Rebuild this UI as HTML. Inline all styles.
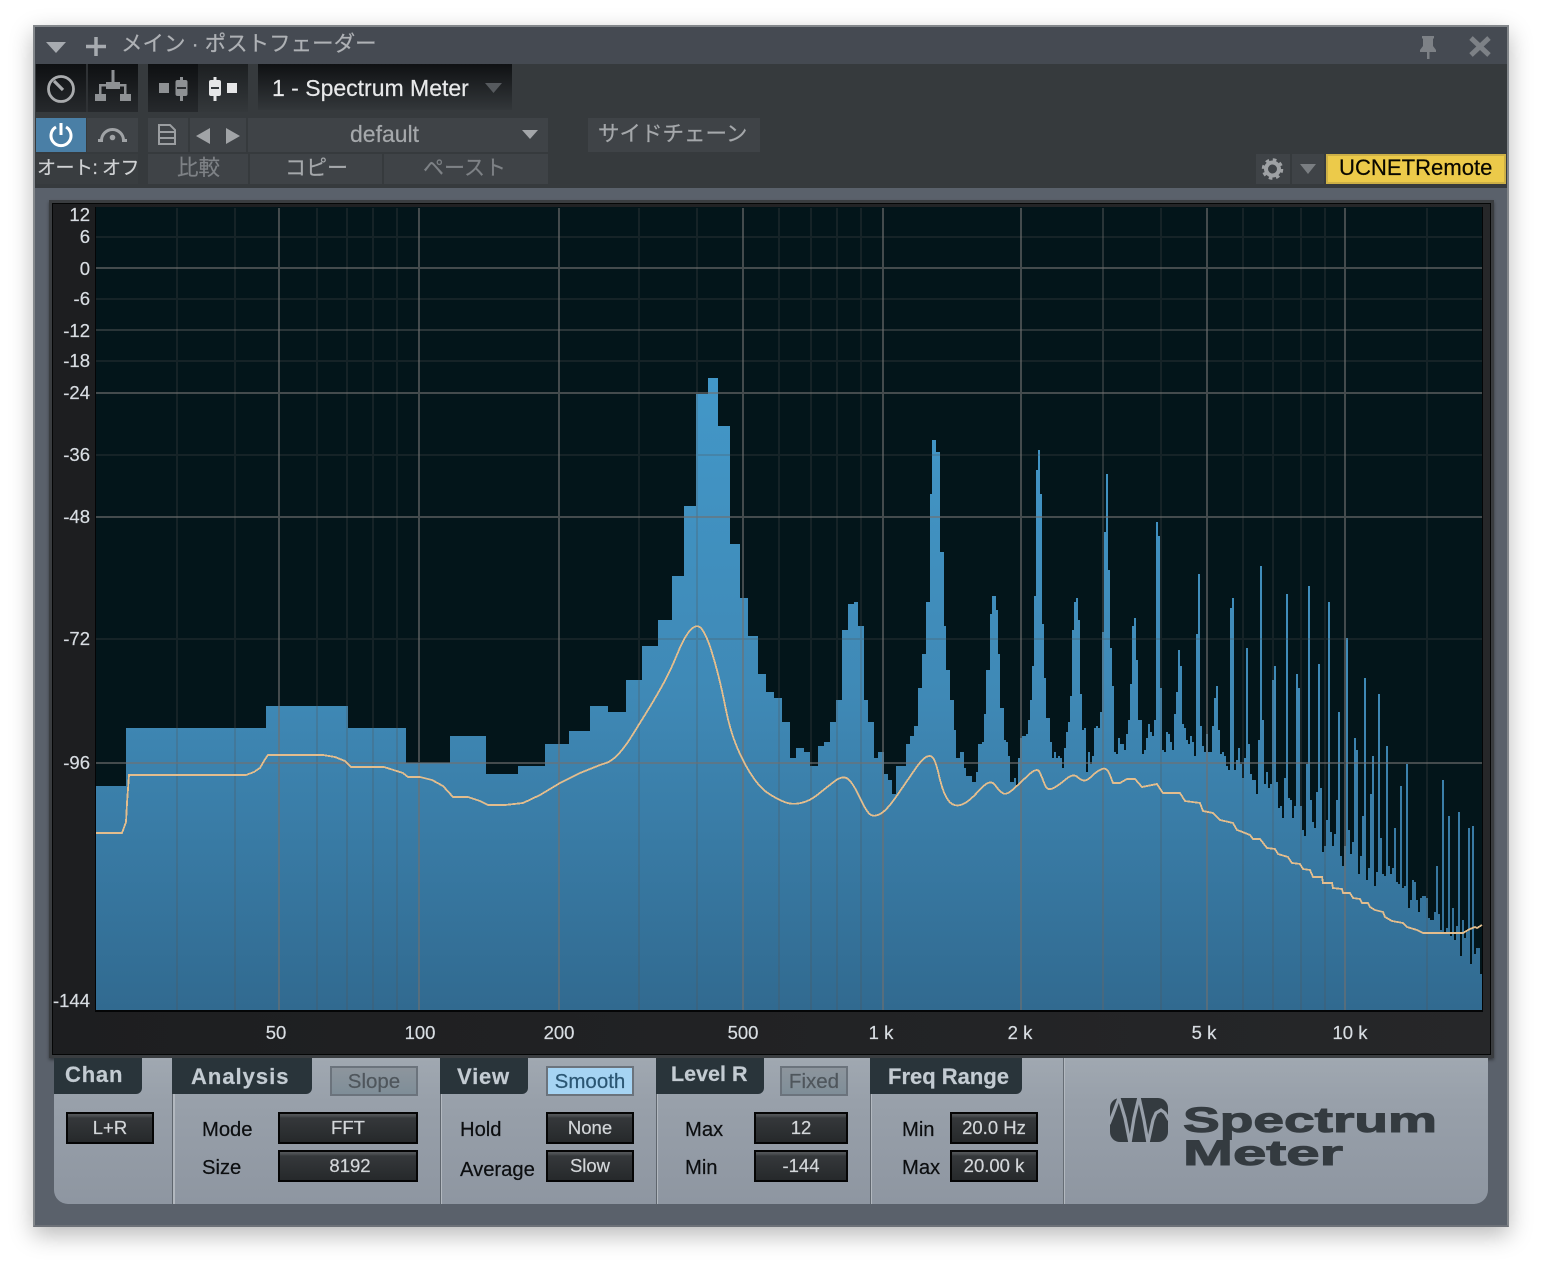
<!DOCTYPE html>
<html lang="ja"><head><meta charset="utf-8"><title>Spectrum Meter</title>
<style>
html,body{margin:0;padding:0;background:#fff;width:1542px;height:1268px;overflow:hidden}
body{font-family:"Liberation Sans","Noto Sans CJK JP",sans-serif;position:relative;-webkit-text-stroke:.2px}
.b{position:absolute;box-sizing:border-box}
.t{position:absolute;white-space:nowrap;line-height:1}
.btn{position:absolute;box-sizing:border-box;border:2px solid #050505;background:linear-gradient(#55585b 0,#4a4d50 2px,#35383b 4px,#26292b 100%);color:#d3d6d9;font-size:18.5px;display:flex;align-items:center;justify-content:center;height:32px}
.tab{position:absolute;background:#29343a;border-radius:0 0 6px 0;height:36px;top:1058px}
.tt{position:absolute;white-space:nowrap;line-height:1;font-weight:bold;font-size:22px;color:#c3cbd2}
.lb{position:absolute;white-space:nowrap;line-height:1;font-size:20.2px;color:#0c0e10}
.tg{position:absolute;box-sizing:border-box;border:2px solid #6b737c;height:30px;top:1066px;background:linear-gradient(#8d959d,#7f8e98);color:#4f565c;font-size:20.5px;display:flex;align-items:center;justify-content:center;padding-top:2px}
.yl{position:absolute;right:1452px;white-space:nowrap;line-height:1;font-size:18.5px;color:#d8dde2}
.xl{position:absolute;top:1024px;width:80px;text-align:center;line-height:1;font-size:18.5px;color:#d8dde2}
.tb{position:absolute;box-sizing:border-box;background:#3f4347}
</style></head><body>

<div class="b" style="left:33px;top:25px;width:1476px;height:1202px;background:#5a616b;border:2px solid #83878b;border-bottom-color:#6d7178;box-shadow:0 8px 22px rgba(0,0,0,.28)"></div>
<div class="b" style="left:35px;top:27px;width:1472px;height:37px;background:#454a52"></div>
<div class="b" style="left:35px;top:64px;width:1472px;height:124px;background:#363a3d"></div>

<div class="b" style="left:36px;top:64px;width:102px;height:48px;background:linear-gradient(#0e1012,#26292c)"></div>
<div class="b" style="left:86px;top:64px;width:2px;height:48px;background:#2f3235"></div>
<div class="b" style="left:148px;top:64px;width:50px;height:48px;background:linear-gradient(#0e1012,#26292c)"></div>
<div class="b" style="left:198px;top:64px;width:50px;height:48px;background:linear-gradient(#1c1f21,#34383b)"></div>
<div class="b" style="left:258px;top:64px;width:254px;height:46px;background:linear-gradient(#0f1113,#33373a)"></div>

<div class="tb" style="left:36px;top:118px;width:50px;height:34px;background:#4a7fa6"></div>
<div class="tb" style="left:87px;top:118px;width:51px;height:34px"></div>
<div class="tb" style="left:148px;top:118px;width:40px;height:34px"></div>
<div class="tb" style="left:190px;top:118px;width:56px;height:34px"></div>
<div class="tb" style="left:248px;top:118px;width:300px;height:34px"></div>
<div class="tb" style="left:588px;top:118px;width:172px;height:34px"></div>
<div class="tb" style="left:36px;top:154px;width:102px;height:30px;background:#393d40"></div>
<div class="tb" style="left:148px;top:154px;width:100px;height:30px"></div>
<div class="tb" style="left:250px;top:154px;width:132px;height:30px"></div>
<div class="tb" style="left:384px;top:154px;width:164px;height:30px"></div>
<div class="tb" style="left:1256px;top:154px;width:34px;height:30px"></div>
<div class="tb" style="left:1292px;top:154px;width:32px;height:30px"></div>
<div class="b" style="left:1326px;top:154px;width:180px;height:30px;background:#ecca4a;border:2px solid #cdb046"></div>

<!-- display frame -->
<div class="b" style="left:49px;top:200px;width:1445px;height:858px;background:linear-gradient(90deg,#1d1e20,#262729);border:3px solid #3a3d40;box-shadow:0 2px 3px rgba(0,0,0,.4)"></div>
<div class="b" style="left:52px;top:203px;width:1439px;height:852px;border:1px solid #050606"></div>

<!-- bottom panel -->
<div class="b" style="left:54px;top:1058px;width:1434px;height:146px;background:linear-gradient(#a0a8b1,#98a0aa 30%,#8e96a1);border-radius:0 0 14px 14px"></div>
<div class="b" style="left:172px;top:1094px;width:1px;height:110px;background:#5f666e"></div><div class="b" style="left:173px;top:1094px;width:2px;height:110px;background:#b2b8bf"></div>
<div class="b" style="left:440px;top:1094px;width:1px;height:110px;background:#5f666e"></div><div class="b" style="left:441px;top:1094px;width:1px;height:110px;background:#b2b8bf"></div>
<div class="b" style="left:656px;top:1094px;width:1px;height:110px;background:#5f666e"></div><div class="b" style="left:657px;top:1094px;width:1px;height:110px;background:#b2b8bf"></div>
<div class="b" style="left:870px;top:1094px;width:1px;height:110px;background:#5f666e"></div><div class="b" style="left:871px;top:1094px;width:1px;height:110px;background:#b2b8bf"></div>
<div class="b" style="left:1063px;top:1058px;width:1px;height:146px;background:#666d75"></div><div class="b" style="left:1064px;top:1058px;width:1px;height:146px;background:#b2b8bf"></div>

<div class="tab" style="left:54px;width:88px"></div>
<div class="tab" style="left:172px;width:140px"></div>
<div class="tab" style="left:440px;width:88px"></div>
<div class="tab" style="left:656px;width:108px"></div>
<div class="tab" style="left:870px;width:152px"></div>

<svg width="1542" height="1268" viewBox="0 0 1542 1268" style="position:absolute;left:0;top:0;-webkit-text-stroke:0">
<defs><linearGradient id="g" gradientUnits="userSpaceOnUse" x1="0" y1="380" x2="0" y2="1010"><stop offset="0" stop-color="#4297c8"/><stop offset=".5" stop-color="#3f89b6"/><stop offset="1" stop-color="#316a90"/></linearGradient></defs>
<rect x="95" y="207" width="1388" height="805" fill="#040506"/>
<rect x="96" y="207" width="1386" height="803" fill="#03151a"/>
<path fill="url(#g)" d="M96 1010V786H126V728H266V706H348V728H406V763H450V736H486V774H518V766H545V744H569V731H590V706H608V712H626V680H642V646H658V620H672V576H684V506H696V394H708V378H718V426H730V544H740V598H748V636H758V674H766V692H774V698H782V722H790V758H796V748H804V752H810V766H818V746H824V742H830V722H836V700H842V630H848V604H854V602H858V626H864V700H868V722H874V758H878V752H884V774H888V780H892V794H896V766H906V744H910V736H914V726H918V688H922V654H926V602H930V494H932V440H936V452H940V552H944V626H946V670H950V700H954V730H956V758H960V752H964V768H966V776H972V782H976V772H978V744H982V742H984V714H986V670H990V614H992V596H996V610H998V654H1000V708H1004V740H1006V742H1008V756H1010V782H1014V778H1016V786H1018V758H1020V738H1022V736H1026V734H1028V720H1030V700H1032V666H1034V596H1036V470H1038V450H1040V494H1042V624H1044V678H1046V718H1050V742H1052V758H1054V752H1056V758H1058V756H1060V758H1062V768H1064V748H1066V732H1068V722H1070V696H1072V630H1074V602H1076V598H1078V620H1080V694H1082V730H1084V728H1086V772H1088V752H1090V764H1092V756H1094V728H1096V726H1098V728H1100V712H1102V632H1104V532H1106V474H1108V570H1110V648H1112V686H1114V752H1116V754H1118V738H1120V744H1124V750H1126V734H1128V720H1130V684H1132V626H1134V618H1136V660H1138V720H1142V754H1144V750H1146V738H1148V724H1150V732H1152V736H1154V720H1156V522H1158V536H1160V688H1162V750H1164V752H1166V732H1168V734H1170V742H1172V750H1174V714H1176V692H1178V650H1180V666H1182V724H1184V728H1186V740H1188V744H1190V736H1192V742H1194V756H1196V634H1198V574H1200V726H1202V746H1204V752H1206V734H1208V752H1212V726H1214V698H1216V686H1218V730H1220V754H1222V752H1224V756H1226V766H1228V770H1230V608H1232V598H1234V770H1236V760H1238V748H1240V764H1242V778H1244V758H1246V648H1248V744H1250V774H1252V780H1256V794H1258V740H1260V566H1262V720H1264V784H1266V772H1268V788H1270V784H1272V680H1274V666H1276V782H1278V808H1280V806H1282V818H1284V778H1286V594H1288V798H1290V800H1292V818H1294V806H1296V674H1298V688H1300V806H1302V830H1304V836H1306V764H1308V586H1310V800H1312V822H1314V828H1316V792H1318V664H1320V788H1322V852H1324V846H1326V820H1328V602H1330V832H1332V846H1334V834H1336V800H1338V712H1340V856H1342V866H1344V846H1346V638H1348V830H1350V854H1352V842H1354V738H1356V750H1358V874H1360V856H1362V816H1364V678H1366V880H1368V868H1370V794H1372V756H1374V886H1376V872H1378V694H1380V838H1382V874H1384V876H1386V746H1388V866H1390V874H1392V868H1394V828H1396V882H1398V884H1400V786H1402V888H1404V886H1406V764H1408V908H1410V900H1412V880H1414V882H1416V900H1418V912H1420V898H1422V896H1426V898H1428V918H1430V920H1434V912H1436V866H1438V914H1440V930H1442V780H1444V932H1446V928H1448V816H1450V936H1452V908H1454V940H1456V926H1458V812H1460V956H1462V920H1464V938H1466V932H1468V828H1470V964H1472V826H1474V954H1476V948H1480V974H1482V1010Z"/>
<g shape-rendering="crispEdges" stroke-width="2" fill="none">
<path stroke="#555" stroke-opacity=".24" d="M177 208V1010M235 208V1010M317 208V1010M347 208V1010M373 208V1010M397 208V1010M639 208V1010M697 208V1010M779 208V1010M811 208V1010M837 208V1010M861 208V1010M1161 208V1010M1243 208V1010M1273 208V1010M1301 208V1010M1325 208V1010M1427 208V1010M96 237H1482M96 299H1482M96 361H1482M96 455H1482M96 639H1482"/>
<path stroke="#666" stroke-opacity=".4" d="M1103 208V1010M96 330H1482"/>
<path stroke="#707070" stroke-opacity=".6" d="M279 208V1010M419 208V1010M559 208V1010M743 208V1010M883 208V1010M1021 208V1010M1207 208V1010M1345 208V1010M96 268H1482M96 393H1482M96 517H1482M96 763H1482"/>
</g>
<path fill="none" stroke="#e3bd8d" stroke-width="1.8" shape-rendering="crispEdges" d="M96 833L122 833L126 822L127 803L129 775L246 775L254 772L260 768L264 761L268 755L323 755L335 757L345 761L351 767L384 767L403 773L408 777L420 777L432 780L443 786L453 797L468 797L480 801L488 805L505 805L523 803L540 795L560 783L580 773L600 765L606 763Q612,761 618.5,754Q625,747 631.5,736.5Q638,726 645.5,714Q653,702 661.5,687Q670,672 677.5,653.5Q685,635 691.5,629Q698,623 702.5,630Q707,637 711,649.5Q715,662 718.5,676Q722,690 726,710Q730,730 736.5,746Q743,762 751.5,775Q760,788 768.5,793.5Q777,799 784.5,802Q792,805 801,803Q810,801 818.5,794Q827,787 835,781Q843,775 848,779Q853,783 860,798Q867,813 871,815Q875,817 881,813.5Q887,810 897,795.5Q907,781 913.5,771.5Q920,762 924,758.5Q928,755 931.5,756.5Q935,758 939,775.5Q943,793 948,800Q953,807 960.5,805Q968,803 979,790.5Q990,778 995,785Q1000,792 1003.5,793.5Q1007,795 1013.5,789Q1020,783 1028.5,775Q1037,767 1039.5,772Q1042,777 1044.5,784Q1047,791 1052.5,788.5Q1058,786 1065.5,779.5Q1073,773 1077.5,777Q1082,781 1085,780.5Q1088,780 1092.5,775.5Q1097,771 1102,769Q1107,767 1110,775L1113 783L1120 783L1127 779L1135 779L1142 787L1157 784L1163 793L1180 793L1185 801L1200 803L1203 811L1213 813L1220 820L1233 823L1237 830L1240 831L1250 835L1253 839L1260 839L1267 848L1275 849L1278 854L1288 857L1292 863L1300 864L1303 869L1310 870L1313 877L1322 877L1323 883L1332 883L1333 888L1342 889L1343 893L1350 893L1353 898L1360 899L1362 903L1368 903L1370 907L1375 910L1383 912L1385 917L1392 921L1403 923L1407 927L1417 930L1423 933L1447 933L1463 933L1470 929L1475 927L1477 928L1482 925"/>

<!-- title icons -->
<path d="M46 42H66L56 53Z" fill="#a7abb0"/>
<path d="M86 46.5H106M96 37V56" stroke="#a7abb0" stroke-width="3.5"/>
<path d="M1422 36H1434V38L1433 39V46L1436 50V52H1429.5V59H1427V52H1420V50L1423 46V39L1422 38Z" fill="#7d8186"/>
<path d="M1471 38L1489 55M1489 38L1471 55" stroke="#7d8186" stroke-width="5"/>
<!-- knob -->
<circle cx="61" cy="89" r="12.5" fill="none" stroke="#a9abad" stroke-width="2.8"/>
<path d="M54 81L63 90" stroke="#a9abad" stroke-width="3.2"/>
<!-- tree -->
<g fill="#8e9194" stroke="none"><rect x="111.5" y="70" width="3" height="13"/><rect x="106" y="82" width="14" height="7"/><rect x="99" y="84" width="27" height="2.5"/><rect x="99" y="84" width="2.5" height="11"/><rect x="124" y="84" width="2.5" height="11"/><rect x="95" y="94" width="11" height="7"/><rect x="120" y="94" width="11" height="7"/></g>
<!-- mixer icons -->
<rect x="159" y="83" width="10" height="10" fill="#8e9194"/>
<rect x="180" y="77" width="3" height="24" fill="#8e9194"/><rect x="175.5" y="80" width="12" height="16" rx="2" fill="#8e9194"/><rect x="177" y="87" width="9" height="2" fill="#2a2d30"/>
<rect x="213.5" y="77" width="3" height="24" fill="#e6e7e8"/><rect x="209" y="80" width="12" height="16" rx="2" fill="#e6e7e8"/><rect x="211" y="87" width="8" height="2" fill="#34383b"/>
<rect x="227" y="83" width="10" height="10" fill="#e6e7e8"/>
<path d="M485 83H502L493.5 93Z" fill="#565a5e"/>
<!-- power -->
<path d="M56 127A10 10 0 1 0 66 127" fill="none" stroke="#fff" stroke-width="3"/><path d="M61 123V135" stroke="#fff" stroke-width="3"/>
<path d="M98 140.500H101.500A11 11 0 0 1 123.500 140.500H127" fill="none" stroke="#a0a3a6" stroke-width="3"/><circle cx="112.500" cy="137.500" r="2.800" fill="#a0a3a6"/>
<!-- file -->
<path d="M159 125H170L175 130V144H159Z M159 132H175 M159 138H175" fill="none" stroke="#9b9ea1" stroke-width="2"/>
<path d="M210 128V144L196 136Z M226 128V144L240 136Z" fill="#a1a4a7"/>
<path d="M522 130H538L530 139Z" fill="#a3a6a9"/>
<!-- gear -->
<circle cx="1272.5" cy="169" r="6.5" fill="none" stroke="#9ea1a4" stroke-width="4"/>
<circle cx="1272.5" cy="169" r="9" fill="none" stroke="#9ea1a4" stroke-width="3.5" stroke-dasharray="3.5 3.57"/>
<path d="M1300 164H1316L1308 174Z" fill="#7a7e82"/>
<!-- logo -->
<rect x="1110" y="1098" width="58" height="44" rx="10" fill="#343b40"/>
<polyline fill="none" stroke="#98a0aa" stroke-width="3.2" stroke-linejoin="miter" points="1109,1124 1113,1114 1119,1098 1125,1118 1130,1143 1134,1118 1139,1097 1144,1120 1148,1143 1153,1120 1156,1113 1161,1110 1165,1113 1169,1120"/>
<g font-family="'Liberation Sans',sans-serif" font-weight="bold" fill="#343b40" font-size="35">
<text x="1183" y="1132" textLength="254" lengthAdjust="spacingAndGlyphs" stroke="#343b40" stroke-width="1">Spectrum</text>
<text x="1183" y="1165" textLength="160" lengthAdjust="spacingAndGlyphs" stroke="#343b40" stroke-width="1">Meter</text>
</g>
</svg>

<!-- toolbar text -->
<div class="t" style="left:121px;top:34px;font-size:21.5px;color:#aeb1b5">メイン · ポストフェーダー</div>
<div class="t" style="left:272px;top:77px;font-size:23px;color:#e8e9ea">1 - Spectrum Meter</div>
<div class="t" style="left:350px;top:123px;font-size:23px;color:#a5a8ab">default</div>
<div class="t" style="left:598px;top:124px;font-size:21.5px;color:#a5a8ab">サイドチェーン</div>
<div class="t" style="left:37px;top:159px;font-size:19px;letter-spacing:-.5px;color:#d0d2d4">オート: オフ</div>
<div class="t" style="left:177px;top:158px;font-size:21.5px;color:#7e8286">比較</div>
<div class="t" style="left:285px;top:158px;font-size:21px;color:#a5a8ab">コピー</div>
<div class="t" style="left:423px;top:158px;font-size:21px;color:#7e8286">ペースト</div>
<div class="t" style="left:1339px;top:157px;font-size:22.1px;color:#0a0800">UCNETRemote</div>

<!-- y labels -->
<div class="yl" style="top:206px">12</div><div class="yl" style="top:228px">6</div><div class="yl" style="top:260px">0</div><div class="yl" style="top:290px">-6</div><div class="yl" style="top:322px">-12</div><div class="yl" style="top:352px">-18</div><div class="yl" style="top:384px">-24</div><div class="yl" style="top:446px">-36</div><div class="yl" style="top:508px">-48</div><div class="yl" style="top:630px">-72</div><div class="yl" style="top:754px">-96</div><div class="yl" style="top:992px">-144</div>
<!-- x labels -->
<div class="xl" style="left:236px">50</div><div class="xl" style="left:380px">100</div><div class="xl" style="left:519px">200</div><div class="xl" style="left:703px">500</div><div class="xl" style="left:841px">1 k</div><div class="xl" style="left:980px">2 k</div><div class="xl" style="left:1164px">5 k</div><div class="xl" style="left:1310px">10 k</div>

<!-- tabs -->
<div class="tt" style="left:65px;top:1064px;letter-spacing:.8px">Chan</div>
<div class="tt" style="left:191px;top:1066px;letter-spacing:1px">Analysis</div>
<div class="tt" style="left:457px;top:1066px;letter-spacing:.8px">View</div>
<div class="tt" style="left:671px;top:1064px;font-size:21.5px">Level R</div>
<div class="tt" style="left:888px;top:1066px">Freq Range</div>

<div class="tg" style="left:330px;width:88px">Slope</div>
<div class="tg" style="left:546px;width:88px;background:#a6d4f3;color:#2b5673">Smooth</div>
<div class="tg" style="left:780px;width:68px">Fixed</div>

<div class="btn" style="left:66px;top:1112px;width:88px">L+R</div>
<div class="btn" style="left:278px;top:1112px;width:140px">FFT</div>
<div class="btn" style="left:278px;top:1150px;width:140px;padding-left:4px">8192</div>
<div class="btn" style="left:546px;top:1112px;width:88px">None</div>
<div class="btn" style="left:546px;top:1150px;width:88px">Slow</div>
<div class="btn" style="left:754px;top:1112px;width:94px">12</div>
<div class="btn" style="left:754px;top:1150px;width:94px">-144</div>
<div class="btn" style="left:950px;top:1112px;width:88px">20.0 Hz</div>
<div class="btn" style="left:950px;top:1150px;width:88px">20.00 k</div>

<div class="lb" style="left:202px;top:1120px">Mode</div>
<div class="lb" style="left:202px;top:1158px">Size</div>
<div class="lb" style="left:460px;top:1120px">Hold</div>
<div class="lb" style="left:460px;top:1160px">Average</div>
<div class="lb" style="left:685px;top:1120px">Max</div>
<div class="lb" style="left:685px;top:1158px">Min</div>
<div class="lb" style="left:902px;top:1120px">Min</div>
<div class="lb" style="left:902px;top:1158px">Max</div>
</body></html>
